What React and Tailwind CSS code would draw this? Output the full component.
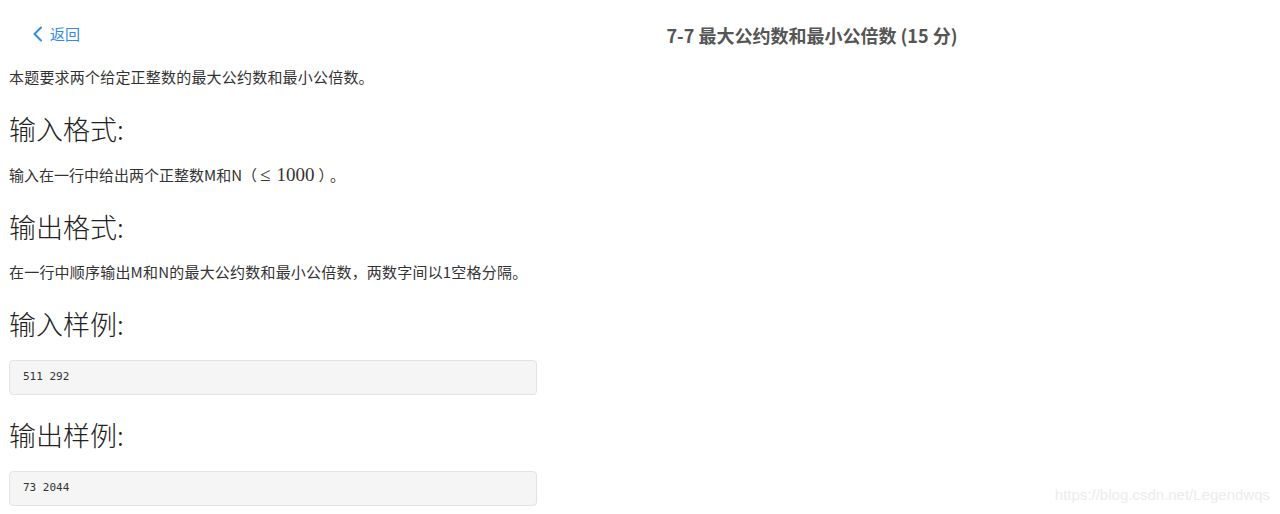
import React from "react";

const CodeBox = ({ children }) => (
  <div className="w-[528px] h-[35px] mt-[18px] flex items-center px-[13px] bg-[#f5f5f5] border border-[#e3e3e3] rounded-[4px]">
    <pre className="text-[11px] text-[#333] font-['DejaVu_Sans_Mono','Liberation_Mono',monospace]">
      {children}
    </pre>
  </div>
);

const Heading = ({ children, className = "" }) => (
  <h3
    className={`text-[27px] leading-[36px] font-light text-[#222] ${className}`}
  >
    {children}
  </h3>
);

const App = () => {
  return (
    <div className="relative w-full h-[514px] overflow-hidden bg-white font-['Noto_Sans_CJK_SC','Noto_Sans',sans-serif] text-[#333]">
      <div className="flex items-center h-[66px] pt-1">
        <div className="w-[344px] pl-[32px]">
          <a className="inline-flex items-center gap-[7px] text-[15px] text-[#2f8ae8] cursor-pointer">
            <svg width="11" height="16" viewBox="0 0 11 16" fill="none">
              <polyline
                points="9,1.5 2.5,8 9,14.5"
                stroke="#2f8ae8"
                strokeWidth="2"
                strokeLinecap="round"
                strokeLinejoin="round"
              />
            </svg>
            返回
          </a>
        </div>
        <div className="flex-1 text-center">
          <h2 className="text-[18px] font-bold text-[#555]">
            7-7 最大公约数和最小公倍数 (15 分)
          </h2>
        </div>
      </div>

      <div className="px-[9px]">
        <p className="text-[15px] leading-[22px] tracking-[0.2px]">
          本题要求两个给定正整数的最大公约数和最小公倍数。
        </p>

        <Heading className="mt-[23px]">输入格式:</Heading>
        <p className="text-[15px] leading-[22px] mt-[17px]">
          输入在一行中给出两个正整数M和N（
          <span className="font-['Liberation_Serif',serif] text-[19px] pl-[3px] pr-[4px]">
            ≤<span className="ml-[6px]">1000</span>
          </span>
          ）<span className="ml-[4px]">。</span>
        </p>

        <Heading className="mt-[23px]">输出格式:</Heading>
        <p className="text-[15px] leading-[22px] mt-[16px] tracking-[0.2px]">
          在一行中顺序输出M和N的最大公约数和最小公倍数，两数字间以1空格分隔。
        </p>

        <Heading className="mt-[23px]">输入样例:</Heading>
        <CodeBox>511 292</CodeBox>

        <Heading className="mt-[22px]">输出样例:</Heading>
        <CodeBox>73 2044</CodeBox>
      </div>

      <div className="absolute right-[10px] bottom-[8px] text-[15px] text-[#ececec] font-['Liberation_Sans',sans-serif] pointer-events-none">
        https://blog.csdn.net/Legendwqs
      </div>
    </div>
  );
};

export default App;
